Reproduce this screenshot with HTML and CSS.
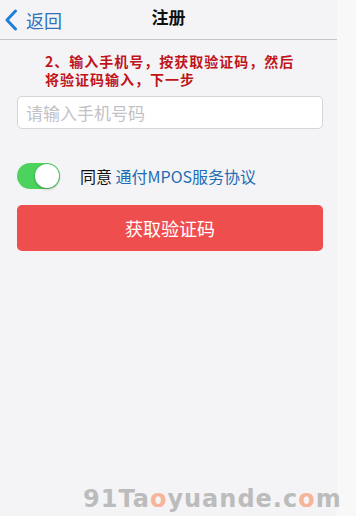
FILE: index.html
```html
<!DOCTYPE html>
<html lang="zh">
<head>
<meta charset="utf-8">
<link rel="stylesheet" href="styles.css">
</head>
<body>
<div class="page">
  <div class="main">
    <header class="nav">
      <div class="back">
        <svg class="chev" width="14" height="22" viewBox="0 0 14 22"><path d="M11.5 2 L3 11 L11.5 20" fill="none" stroke="#1e7fd8" stroke-width="3" stroke-linecap="round" stroke-linejoin="round"/></svg>
        <span>返回</span>
      </div>
      <div class="title">注册</div>
    </header>
    <div class="note">2、输入手机号，按获取验证码，然后<br>将验证码输入，下一步</div>
    <div class="input">请输入手机号码</div>
    <div class="agree">
      <div class="toggle"><div class="knob"></div></div>
      <span class="agree-text">同意 <span class="link">通付MPOS服务协议</span></span>
    </div>
    <div class="btn">获取验证码</div>
  </div>
  <div class="strip"></div>
  <div class="wm">91Ta<span class="o">o</span>yuande.c<span class="o">o</span>m</div>
</div>
</body>
</html>
```
FILE: styles.css
```css
html, body { margin: 0; padding: 0; }
body { width: 356px; height: 516px; overflow: hidden; background: #f7f7f8; font-family: "Noto Sans CJK SC", "Noto Sans", sans-serif; }
.page { display: flex; height: 516px; position: relative; }
.main { width: 337px; background: #f4f4f6; display: flex; flex-direction: column; }
.strip { flex: 1; background: #f8f8f9; }
.nav { height: 39px; border-bottom: 1px solid #c6c6ca; position: relative; display: flex; align-items: center; }
.back { display: flex; align-items: center; padding-left: 4px; color: #2f72b8; font-size: 18px; gap: 8px; }
.chev { display: block; }
.title { position: absolute; left: 0; right: 0; top: 0; height: 36px; line-height: 34px; text-align: center; font-size: 17px; font-weight: 700; color: #111; }
.note { margin: 12px 0 0 45px; font-size: 14px; line-height: 18px; font-weight: 700; color: #c0141a; letter-spacing: 1px; }
.input { margin: 8px 14px 0 17px; height: 31px; border: 1px solid #d6d6da; border-radius: 5px; background: #fff; color: #c2c2c6; font-size: 17px; line-height: 31px; padding-left: 8px; }
.agree { display: flex; align-items: center; margin: 33px 0 0 17px; height: 28px; }
.toggle { width: 43px; height: 26px; border-radius: 13px; background: #4cd35e; position: relative; }
.knob { position: absolute; right: 1px; top: 1px; width: 24px; height: 24px; border-radius: 50%; background: #fff; box-shadow: 0 1px 3px rgba(0,0,0,0.3); }
.agree-text { margin-left: 20px; font-size: 16px; color: #111; }
.link { color: #1e6db4; }
.btn { margin: 15px 14px 0 17px; height: 46px; border-radius: 5px; background: #ef4e4f; color: #fff; font-size: 18px; display: flex; align-items: center; justify-content: center; }
.wm { position: absolute; left: 83px; top: 486px; line-height: 26px; font-family: "DejaVu Sans", sans-serif; font-weight: 700; font-size: 24px; letter-spacing: 1px; color: #bcbcbc; }
.wm .o { color: #f6b49a; }
```
